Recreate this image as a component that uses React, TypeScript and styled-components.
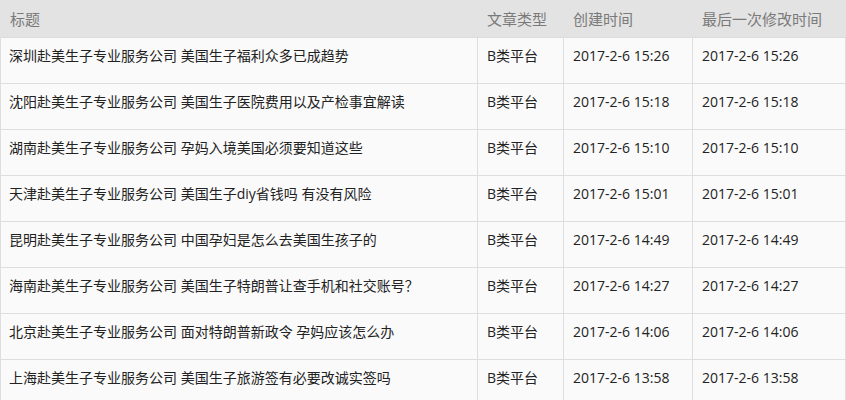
import React from "react";
import styled, { createGlobalStyle } from "styled-components";

const Global = createGlobalStyle`
  html, body { margin: 0; padding: 0; background: #ffffff; }
  body { font-family: "Open Sans", "Noto Sans CJK SC", sans-serif; }
`;

const Table = styled.table`
  width: 845px;
  border-collapse: collapse;
  table-layout: fixed;
  font-family: "Open Sans", "Noto Sans CJK SC", sans-serif;
`;

const HeadCell = styled.th<{ $w: number }>`
  width: ${(p) => p.$w}px;
  height: 37px;
  box-sizing: border-box;
  padding: 0 9px;
  background: #e3e3e3;
  color: #7a7a7a;
  font-weight: normal;
  font-size: 15px;
  text-align: left;
  vertical-align: middle;
  line-height: 20px;
  border: 1px solid #e3e3e3;
  border-bottom: 1px solid #dcdcdc;
`;

const Row = styled.tr`
  background: #fafafa;
`;

const Cell = styled.td<{ $first?: boolean }>`
  height: 46px;
  box-sizing: border-box;
  padding: 8px 9px 0 ${(p) => (p.$first ? "8px" : "9px")};
  color: #222222;
  font-size: 14px;
  vertical-align: top;
  line-height: 20px;
  border: 1px solid #dedede;
  white-space: nowrap;
`;

const rows = [
  ["深圳赴美生子专业服务公司 美国生子福利众多已成趋势", "15:26"],
  ["沈阳赴美生子专业服务公司 美国生子医院费用以及产检事宜解读", "15:18"],
  ["湖南赴美生子专业服务公司 孕妈入境美国必须要知道这些", "15:10"],
  ["天津赴美生子专业服务公司 美国生子diy省钱吗 有没有风险", "15:01"],
  ["昆明赴美生子专业服务公司 中国孕妇是怎么去美国生孩子的", "14:49"],
  ["海南赴美生子专业服务公司 美国生子特朗普让查手机和社交账号？", "14:27"],
  ["北京赴美生子专业服务公司 面对特朗普新政令 孕妈应该怎么办", "14:06"],
  ["上海赴美生子专业服务公司 美国生子旅游签有必要改诚实签吗", "13:58"],
];

export default function App() {
  return (
    <>
      <Global />
      <Table>
        <thead>
          <tr>
            <HeadCell $w={477}>标题</HeadCell>
            <HeadCell $w={86}>文章类型</HeadCell>
            <HeadCell $w={129}>创建时间</HeadCell>
            <HeadCell $w={153}>最后一次修改时间</HeadCell>
          </tr>
        </thead>
        <tbody>
          {rows.map(([title, time]) => (
            <Row key={title}>
              <Cell $first>{title}</Cell>
              <Cell>B类平台</Cell>
              <Cell>2017-2-6 {time}</Cell>
              <Cell>2017-2-6 {time}</Cell>
            </Row>
          ))}
        </tbody>
      </Table>
    </>
  );
}
